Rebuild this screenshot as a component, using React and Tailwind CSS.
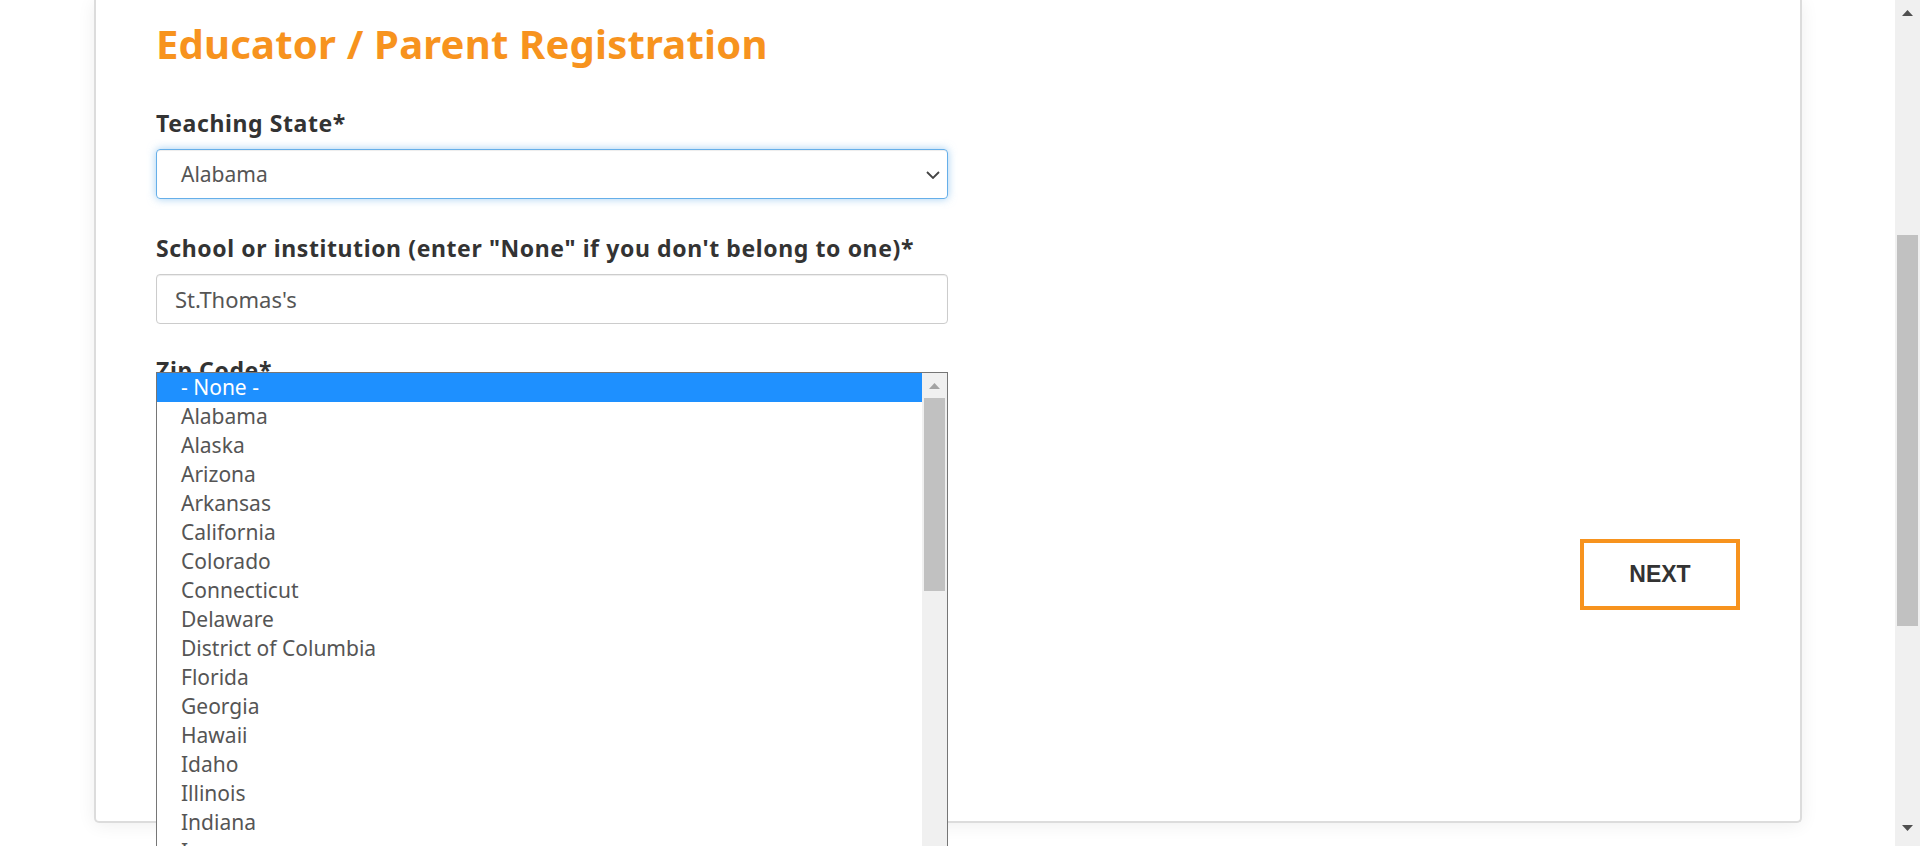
import { useState } from 'react';

const STATES = [
  'Alabama', 'Alaska', 'Arizona', 'Arkansas', 'California', 'Colorado', 'Connecticut',
  'Delaware', 'District of Columbia', 'Florida', 'Georgia', 'Hawaii', 'Idaho',
  'Illinois', 'Indiana', 'Iowa', 'Kansas',
];

function Chevron() {
  return (
    <svg width="14" height="8" viewBox="0 0 14 8" fill="none">
      <path d="M1 1l6 6 6-6" stroke="#444" strokeWidth="1.8" />
    </svg>
  );
}

function Arrow({ up, color }) {
  return (
    <svg width="11" height="6" viewBox="0 0 11 6">
      <polygon points={up ? '0,6 5.5,0 11,6' : '0,0 5.5,6 11,0'} fill={color} />
    </svg>
  );
}

function StateListPopup({ selected }) {
  return (
    <div className="absolute left-[60px] top-[372px] w-[792px] h-[500px] flex border border-[#767676] bg-white">
      <ul className="flex-1 flex flex-col">
        {['- None -', ...STATES].map((name) => (
          <li
            key={name}
            className={
              name === selected
                ? 'h-[29px] pl-[24px] text-[21px] leading-[29px] bg-[#1e90ff] text-white'
                : 'h-[29px] pl-[24px] text-[21px] leading-[29px] text-[#555]'
            }
          >
            {name}
          </li>
        ))}
      </ul>
      {/* list scrollbar */}
      <div className="w-[25px] bg-[#f0f0f0] flex flex-col items-center">
        <div className="h-[25px] flex items-center justify-center">
          <Arrow up color="#a3a3a3" />
        </div>
        <div className="w-[21px] h-[193px] bg-[#c1c1c1]"></div>
      </div>
    </div>
  );
}

export default function App() {
  const [school, setSchool] = useState("St.Thomas's");

  return (
    <div className="w-full h-[846px] flex overflow-hidden bg-white font-['Noto_Sans',sans-serif]">
      <div className="flex-1">
        <div className="relative ml-[94px] w-[1708px] h-[823px] bg-white border-x-2 border-b-2 border-[#dcdcdc] rounded-b-[5px] shadow-[0_2px_18px_rgba(0,0,0,0.07)] pl-[60px] pr-[60px] pt-[20px] flex flex-col">
          <h1 className="h-[48px] text-[40px] leading-[48px] tracking-[0.2px] font-bold text-[#f7931e]">
            Educator / Parent Registration
          </h1>

          <div className="w-[792px] flex flex-col mt-[42px]">
            <label className="text-[23px] leading-[26px] tracking-[0.6px] font-bold text-[#333]">Teaching State*</label>
            <div className="mt-[13px] h-[50px] flex items-center justify-between pl-[24px] pr-[7px] pt-[2px] border border-[#66afe9] rounded-[4px] shadow-[inset_0_1px_1px_rgba(0,0,0,0.075),0_0_8px_rgba(102,175,233,0.6)] text-[21px] text-[#555]">
              <span>Alabama</span>
              <Chevron />
            </div>

            <label className="mt-[36px] text-[23px] leading-[26px] tracking-[0.6px] font-bold text-[#333]">
              School or institution (enter "None" if you don't belong to one)*
            </label>
            <input
              value={school}
              onChange={(e) => setSchool(e.target.value)}
              className="mt-[13px] h-[50px] pl-[18px] border border-[#ccc] rounded-[4px] shadow-[inset_0_1px_1px_rgba(0,0,0,0.075)] text-[22px] text-[#555] outline-none"
            />

            <label className="mt-[33px] text-[23px] leading-[26px] tracking-[0.6px] font-bold text-[#333]">Zip Code*</label>
            <input className="mt-[13px] h-[50px] pl-[18px] border border-[#ccc] rounded-[4px] text-[21px] text-[#555]" />
          </div>

          <div className="flex justify-end mt-[93px]">
            <button className="w-[160px] h-[71px] border-4 border-[#f7931e] bg-white text-[23px] font-bold text-[#333] font-['Liberation_Sans',sans-serif]">
              NEXT
            </button>
          </div>

          <StateListPopup selected="- None -" />
        </div>
      </div>

      {/* page scrollbar */}
      <div className="w-[25px] h-full bg-[#f0f0f0] flex flex-col items-center">
        <div className="h-[25px] flex items-center justify-center">
          <Arrow up color="#505050" />
        </div>
        <div className="mt-[210px] w-[21px] h-[391px] bg-[#c1c1c1]"></div>
        <div className="flex-1"></div>
        <div className="h-[25px] flex items-start justify-center pt-[4px]">
          <Arrow color="#505050" />
        </div>
      </div>
    </div>
  );
}
